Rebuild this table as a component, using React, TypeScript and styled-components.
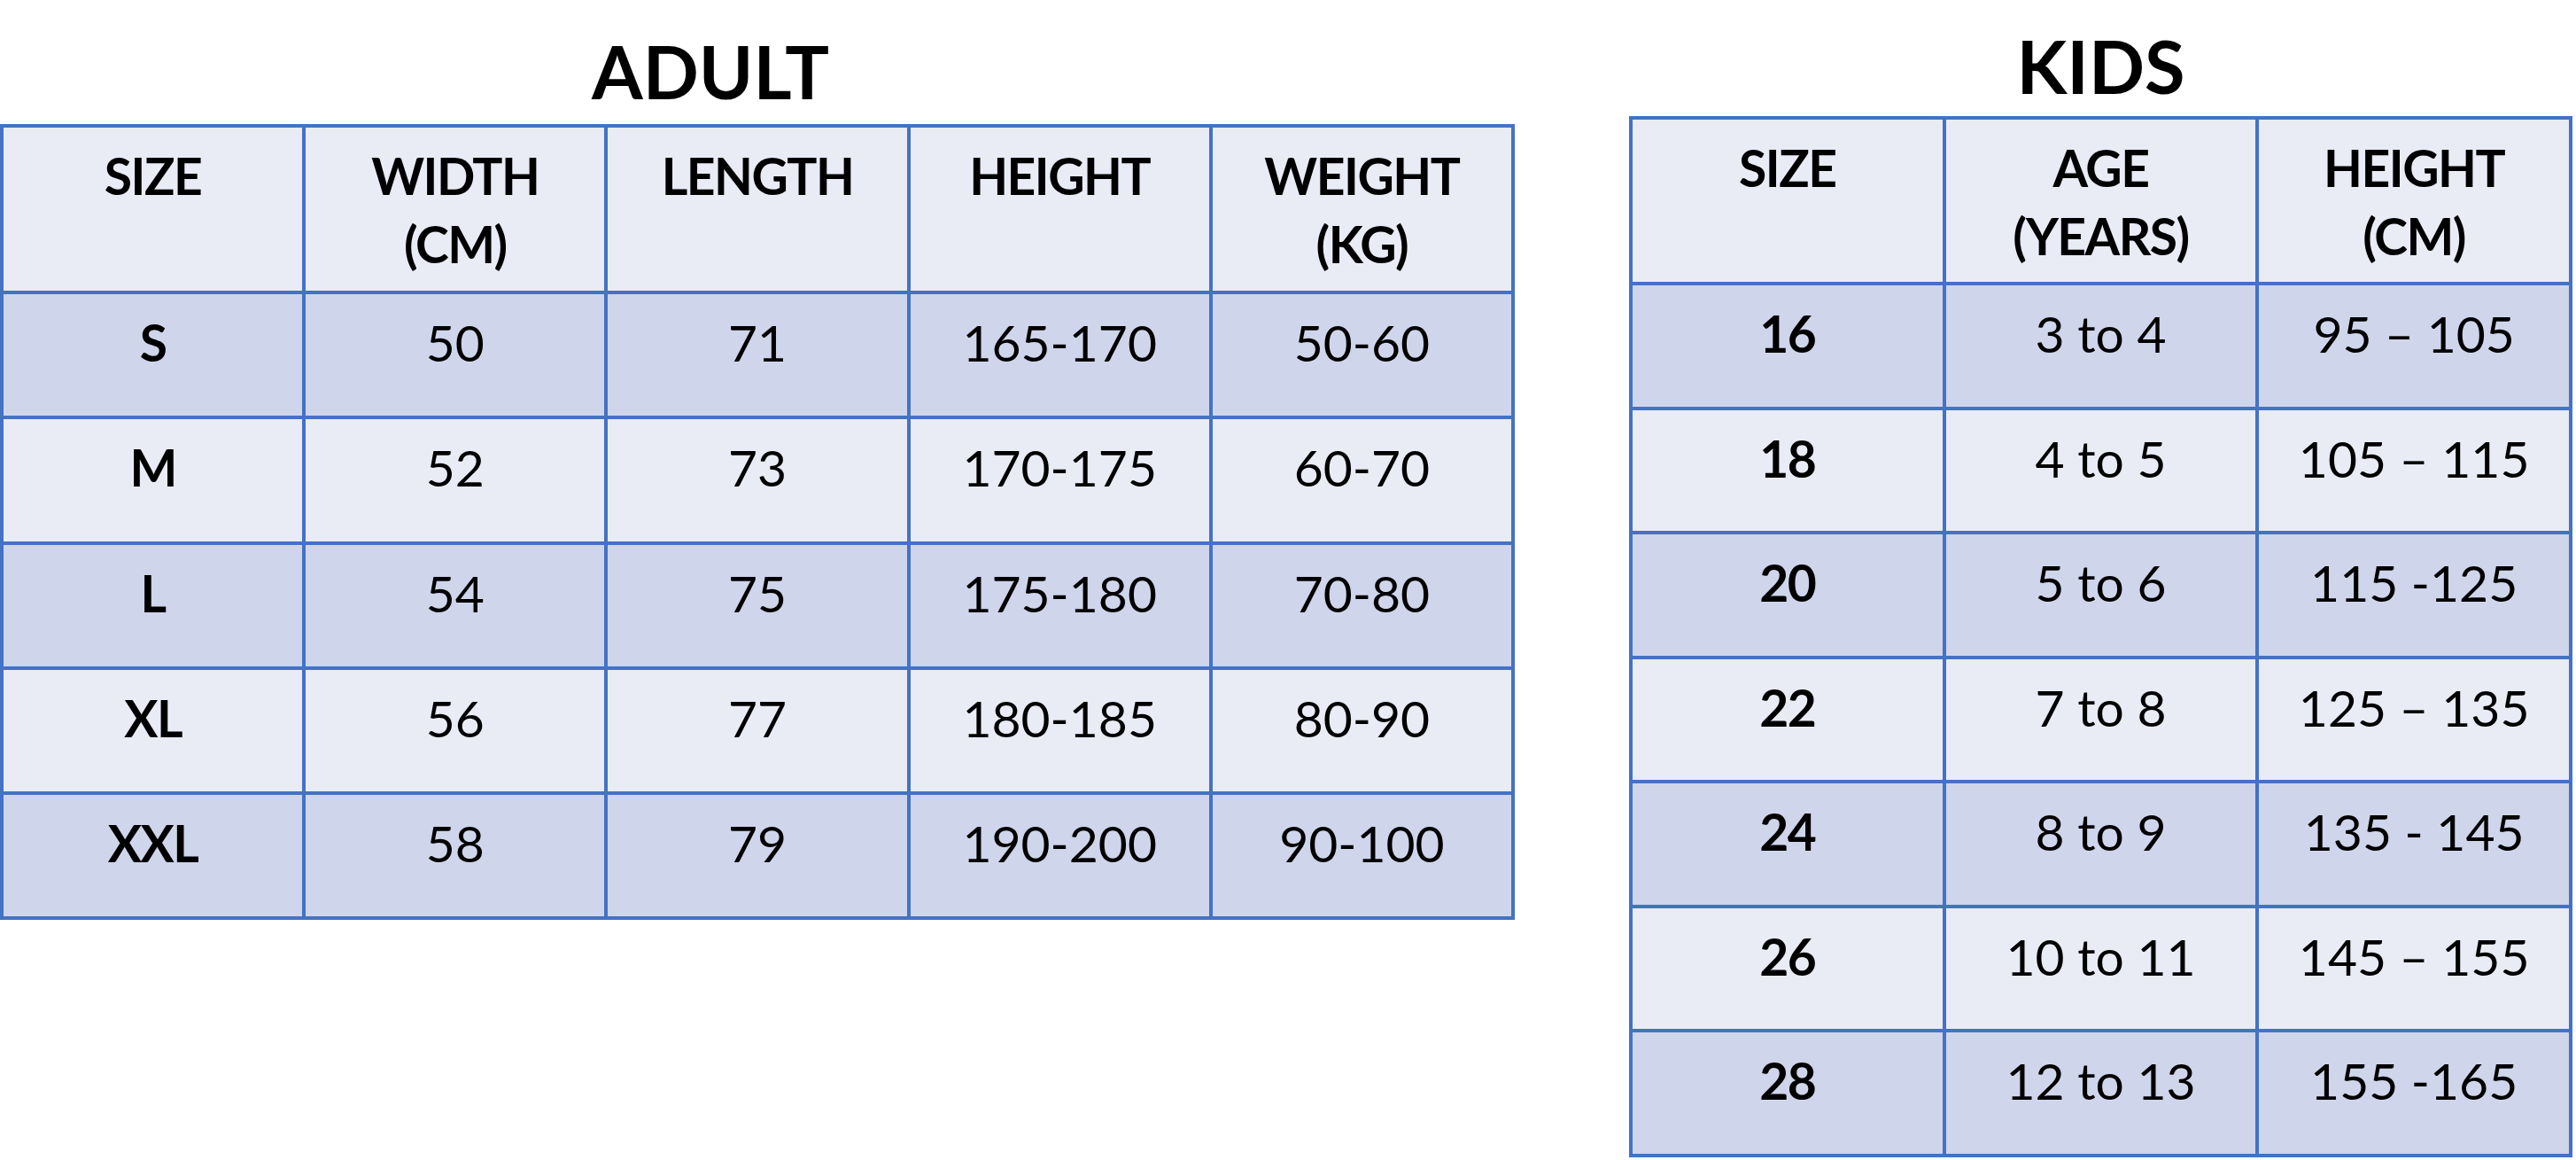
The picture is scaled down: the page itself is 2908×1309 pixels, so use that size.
import React from 'react';
import styled, { createGlobalStyle } from 'styled-components';

const GlobalStyle = createGlobalStyle`
  html, body {
    margin: 0;
    padding: 0;
    background: #ffffff;
  }
  body {
    font-family: Lato, 'Liberation Sans', sans-serif;
    color: #000000;
  }
`;

const Page = styled.div`
  display: flex;
  align-items: flex-start;
  gap: 129px;
  width: 2908px;
  height: 1309px;
  overflow: hidden;
`;

const Section = styled.section<{ $top: number; $width: number }>`
  padding-top: ${(p) => p.$top}px;
  width: ${(p) => p.$width}px;
  flex: none;
`;

const Title = styled.h2<{ $shift: number; $gap: number }>`
  margin: 0 0 ${(p) => p.$gap}px;
  padding-right: ${(p) => p.$shift}px;
  height: 83px;
  font-size: 83px;
  line-height: 83px;
  font-weight: 700;
  text-align: center;
`;

const Grid = styled.div<{ $cols: number; $head: number; $row: number; $rows: number }>`
  display: grid;
  grid-template-columns: repeat(${(p) => p.$cols}, 1fr);
  grid-template-rows: ${(p) => p.$head}px repeat(${(p) => p.$rows}, ${(p) => p.$row}px);
  gap: 4px;
  border: 4px solid #4472c4;
  background: #4472c4;
`;

const Cell = styled.div<{ $dark: boolean; $bold: boolean }>`
  background: ${(p) => (p.$dark ? '#cfd5ea' : '#e9ebf5')};
  font-weight: ${(p) => (p.$bold ? 700 : 400)};
  letter-spacing: ${(p) => (p.$bold ? '-1.5px' : '0')};
  font-size: 57px;
  line-height: 77px;
  text-align: center;
  padding-top: 16px;
  box-sizing: border-box;
  white-space: nowrap;
`;

type Table = {
  head: string[][];
  rows: string[][];
};

const adult: Table = {
  head: [['SIZE'], ['WIDTH', '(CM)'], ['LENGTH'], ['HEIGHT'], ['WEIGHT', '(KG)']],
  rows: [
    ['S', '50', '71', '165-170', '50-60'],
    ['M', '52', '73', '170-175', '60-70'],
    ['L', '54', '75', '175-180', '70-80'],
    ['XL', '56', '77', '180-185', '80-90'],
    ['XXL', '58', '79', '190-200', '90-100'],
  ],
};

const kids: Table = {
  head: [['SIZE'], ['AGE', '(YEARS)'], ['HEIGHT', '(CM)']],
  rows: [
    ['16', '3 to 4', '95 \u2013 105'],
    ['18', '4 to 5', '105 \u2013 115'],
    ['20', '5 to 6', '115 -125'],
    ['22', '7 to 8', '125 \u2013 135'],
    ['24', '8 to 9', '135 - 145'],
    ['26', '10 to 11', '145 \u2013 155'],
    ['28', '12 to 13', '155 -165'],
  ],
};

function SizeTable({ data, head, row }: { data: Table; head: number; row: number }) {
  return (
    <Grid $cols={data.head.length} $head={head} $row={row} $rows={data.rows.length}>
      {data.head.map((lines, i) => (
        <Cell key={'h' + i} $dark={false} $bold>
          {lines.map((l, j) => (
            <div key={j}>{l}</div>
          ))}
        </Cell>
      ))}
      {data.rows.map((r, ri) =>
        r.map((v, ci) => (
          <Cell key={ri + '-' + ci} $dark={ri % 2 === 0} $bold={ci === 0}>
            {v}
          </Cell>
        ))
      )}
    </Grid>
  );
}

export default function App() {
  return (
    <>
      <GlobalStyle />
      <Page>
        <Section $top={39} $width={1710}>
          <Title $shift={106} $gap={18}>ADULT</Title>
          <SizeTable data={adult} head={184} row={137.3} />
        </Section>
        <Section $top={33} $width={1065}>
          <Title $shift={0} $gap={15}>KIDS</Title>
          <SizeTable data={kids} head={183} row={136.57} />
        </Section>
      </Page>
    </>
  );
}
